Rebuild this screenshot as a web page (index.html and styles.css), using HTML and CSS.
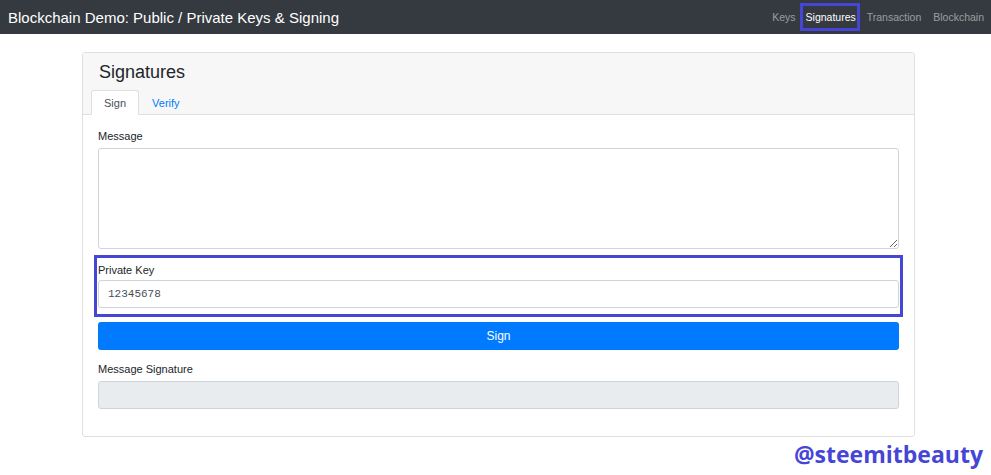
FILE: index.html
```html
<!DOCTYPE html>
<html lang="en">
<head>
    <meta charset="UTF-8">
    <title>Blockchain Demo: Public / Private Keys &amp; Signing</title>
    <link rel="stylesheet" href="styles.css">
</head>
<body>
    <nav class="navbar">
        <span class="brand">Blockchain Demo: Public / Private Keys &amp; Signing</span>
        <div class="nav-links">
            <a href="#">Keys</a>
            <a href="#" class="active">Signatures</a>
            <a href="#">Transaction</a>
            <a href="#">Blockchain</a>
        </div>
    </nav>

    <div class="card">
        <div class="card-header">
            <h4>Signatures</h4>
            <div class="tabs">
                <a href="#" class="tab active">Sign</a>
                <a href="#" class="tab">Verify</a>
            </div>
        </div>
        <div class="card-body">
            <div class="group message-group">
                <label>Message</label>
                <textarea class="control message"></textarea>
            </div>
            <div class="group highlight">
                <label>Private Key</label>
                <input class="control key" type="text" value="12345678">
            </div>
            <button class="sign-button">Sign</button>
            <div class="group">
                <label>Message Signature</label>
                <input class="control readonly" type="text" readonly>
            </div>
        </div>
    </div>

    <div class="watermark">@steemitbeauty</div>
</body>
</html>
```

FILE: styles.css
```css
body {
    font-family: "Liberation Sans", Arial, sans-serif;
    margin: 0;
    background: #fff;
    color: #212529;
}
.navbar {
    background: #343a40;
    height: 34px;
    display: flex;
    align-items: center;
    justify-content: space-between;
    padding: 0 1px 0 8px;
}
.brand {
    color: #fff;
    font-size: 15px;
}
.nav-links {
    display: flex;
    align-items: center;
}
.nav-links a {
    color: rgba(255,255,255,0.5);
    font-size: 10.5px;
    line-height: 13px;
    text-decoration: none;
    padding: 4px 3px 4px 3px;
    border: 3px solid transparent;
}
.nav-links a.active {
    color: #fff;
    border-color: #4646d6;
    padding: 5px 1px 4px 3px;
    margin: 0 1px 0 -2px;
}
.card {
    margin: 18px 76px 0 82px;
    border: 1px solid #dfdfdf;
    border-radius: 3px;
}
.card-header {
    background: #f7f7f7;
    border-bottom: 1px solid #dfdfdf;
    padding: 9px 8px 0 8px;
}
.card-header h4 {
    margin: 0 0 7px 8px;
    font-size: 18px;
    font-weight: normal;
    color: #212529;
}
.tabs {
    display: flex;
    margin-bottom: -1px;
}
.tab {
    font-size: 11px;
    color: #007bff;
    text-decoration: none;
    padding: 6px 12px 5px 12px;
    border: 1px solid transparent;
    border-radius: 3px 3px 0 0;
}
.tab.active {
    color: #495057;
    background: #fff;
    border-color: #dfdfdf #dfdfdf #fff;
}
.card-body {
    padding: 15px 15px 27px 15px;
}
.group label {
    display: block;
    font-size: 11px;
    line-height: 13px;
    color: #212529;
    margin-bottom: 5px;
}
.message-group {
    margin-bottom: 6px;
}
.control {
    display: block;
    width: 100%;
    box-sizing: border-box;
    border: 1px solid #ced4da;
    border-radius: 3px;
    background: #fff;
    font-family: "Liberation Mono", monospace;
    font-size: 11px;
    color: #495057;
    padding: 0 9px;
    margin: 0;
}
.message {
    height: 101px;
    resize: vertical;
}
.key {
    height: 28px;
}
.readonly {
    height: 28px;
    background: #e9ecef;
}
.highlight {
    margin: 0 -4px 5px -4px;
    padding: 6px 1px 6px 1px;
    border: 3px solid #4646d6;
}
.highlight label {
    margin-bottom: 3px;
}
.sign-button {
    display: block;
    width: 100%;
    height: 28px;
    background: #007bff;
    color: #fff;
    border: none;
    border-radius: 3px;
    font-family: "Liberation Sans", Arial, sans-serif;
    font-size: 12px;
    margin-bottom: 13px;
}
.watermark {
    text-align: right;
    padding: 2px 8px 0 0;
    font-family: "Open Sans", sans-serif;
    font-weight: bold;
    font-size: 23px;
    line-height: 30px;
    color: #4646d6;
}
```
